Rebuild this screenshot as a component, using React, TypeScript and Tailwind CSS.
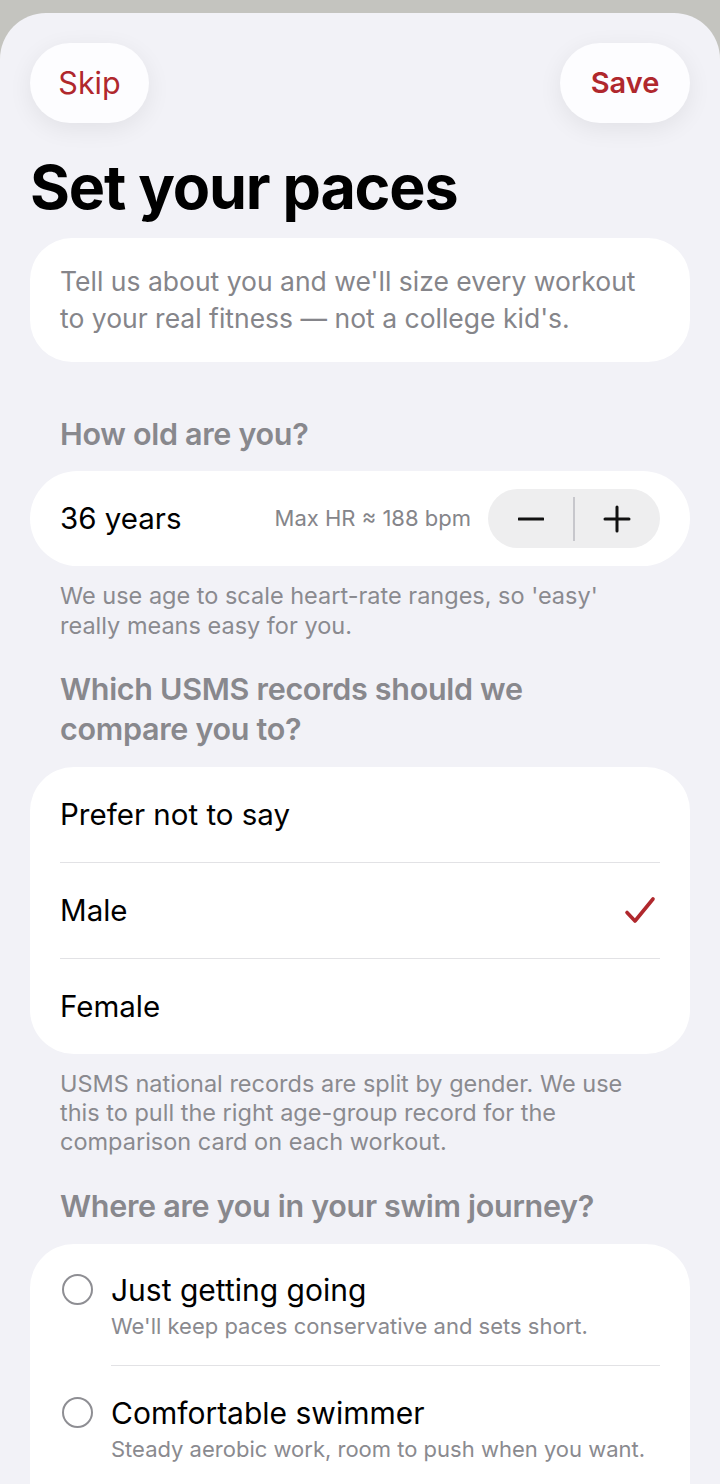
import React from 'react';

const RED = 'text-[#b0282d]';

const Minus = () => (
  <svg width="26" height="26" viewBox="0 0 26 26" fill="none">
    <path d="M1 13h24" stroke="#111" strokeWidth="3" strokeLinecap="round" />
  </svg>
);

const Plus = () => (
  <svg width="28" height="28" viewBox="0 0 28 28" fill="none">
    <path d="M2 14h24M14 2v24" stroke="#111" strokeWidth="3" strokeLinecap="round" />
  </svg>
);

const Check = () => (
  <svg width="32" height="30" viewBox="0 0 32 30" fill="none">
    <path d="M3 16.5 L11 25 L29 3" stroke="#b0282d" strokeWidth="3.6" strokeLinecap="round" strokeLinejoin="round" />
  </svg>
);

const genders = [
  { label: 'Prefer not to say', selected: false },
  { label: 'Male', selected: true },
  { label: 'Female', selected: false },
];

const journeys = [
  { title: 'Just getting going', sub: "We'll keep paces conservative and sets short." },
  { title: 'Comfortable swimmer', sub: 'Steady aerobic work, room to push when you want.' },
];

export default function App() {
  return (
    <div className="w-[720px] h-[1484px] overflow-hidden bg-[#c4c4bf] pt-[13px] font-['Inter','Noto_Sans',sans-serif] antialiased">
      <div className="h-full bg-[#f2f2f7] rounded-t-[46px] px-[30px]">
        {/* Header buttons */}
        <div className="flex justify-between pt-[30px]">
          <button className={`h-[80px] w-[119px] rounded-full bg-[#fdfdff] shadow-[0_6px_24px_rgba(0,0,0,0.07)] text-[30.5px] ${RED}`}>
            Skip
          </button>
          <button className={`h-[80px] w-[130px] rounded-full bg-[#fdfdff] shadow-[0_6px_24px_rgba(0,0,0,0.07)] text-[29px] font-semibold ${RED}`}>
            Save
          </button>
        </div>

        <h1 className="mt-[27px] text-[61px] leading-[74px] font-bold tracking-[-1.2px] text-black">Set your paces</h1>

        {/* Intro */}
        <div className="mt-[14px] rounded-[42px] bg-white pl-[30px] pr-[40px] py-[25px] text-[26.5px] leading-[37px] text-[#85858a]">
          Tell us about you and we'll size every workout to your real fitness — not a college kid's.
        </div>

        {/* Age */}
        <h2 className="mt-[54px] pl-[30px] pr-[50px] text-[30.5px] leading-[36px] font-semibold tracking-[-0.3px] text-[#88888d]">How old are you?</h2>
        <div className="mt-[19px] h-[95px] rounded-full bg-white flex items-center pl-[30px] pr-[30px]">
          <span className="text-[29.5px] text-black">36 years</span>
          <span className="ml-auto mr-[17px] text-[22px] text-[#85858a]">Max HR ≈ 188 bpm</span>
          <div className="h-[59px] w-[172px] rounded-full bg-[#eeeeef] flex items-center">
            <button className="flex-1 h-full flex items-center justify-center"><Minus /></button>
            <div className="w-[1.5px] h-[44px] bg-[#c7c7cc]" />
            <button className="flex-1 h-full flex items-center justify-center"><Plus /></button>
          </div>
        </div>
        <p className="mt-[15px] px-[30px] text-[23.5px] leading-[30px] text-[#8a8a8f]">
          We use age to scale heart-rate ranges, so 'easy' really means easy for you.
        </p>

        {/* Gender */}
        <h2 className="mt-[28px] pl-[30px] pr-[50px] text-[30.5px] leading-[40px] font-semibold tracking-[-0.3px] text-[#88888d]">
          Which USMS records should we compare you to?
        </h2>
        <div className="mt-[18px] rounded-[44px] bg-white px-[30px]">
          {genders.map((g, i) => (
            <div key={g.label}>
              {i > 0 && <div className="h-px bg-[#e2e2e5]" />}
              <div className="h-[95px] flex items-center justify-between">
                <span className="text-[29.5px] text-black">{g.label}</span>
                {g.selected && <span className="mr-[4px]"><Check /></span>}
              </div>
            </div>
          ))}
        </div>
        <p className="mt-[15px] px-[30px] text-[23.5px] leading-[29px] text-[#8a8a8f]">
          USMS national records are split by gender. We use this to pull the right age-group record for the comparison card on each workout.
        </p>

        {/* Journey */}
        <h2 className="mt-[30px] pl-[30px] pr-[50px] text-[30.5px] leading-[40px] font-semibold tracking-[-0.3px] text-[#88888d]">
          Where are you in your swim journey?
        </h2>
        <div className="mt-[18px] rounded-t-[44px] bg-white pl-[32px] pr-[30px] pb-[40px]">
          {journeys.map((j, i) => (
            <div key={j.title} className="flex gap-[18px]">
              <div className="pt-[1px] flex flex-col">
                <div className={`${i === 0 ? 'mt-[29px]' : 'mt-[30px]'} w-[31px] h-[31px] rounded-full border-[2.5px] border-[#8e8e93]`} />
              </div>
              <div className={`flex-1 ${i === 0 ? 'pt-[28px] pb-[24px] border-b border-[#e2e2e5]' : 'pt-[29px]'}`}>
                <div className="text-[30px] leading-[36px] text-black">{j.title}</div>
                <div className="mt-[3px] text-[22px] leading-[30px] text-[#8a8a8f]">{j.sub}</div>
              </div>
            </div>
          ))}
        </div>
      </div>
    </div>
  );
}
